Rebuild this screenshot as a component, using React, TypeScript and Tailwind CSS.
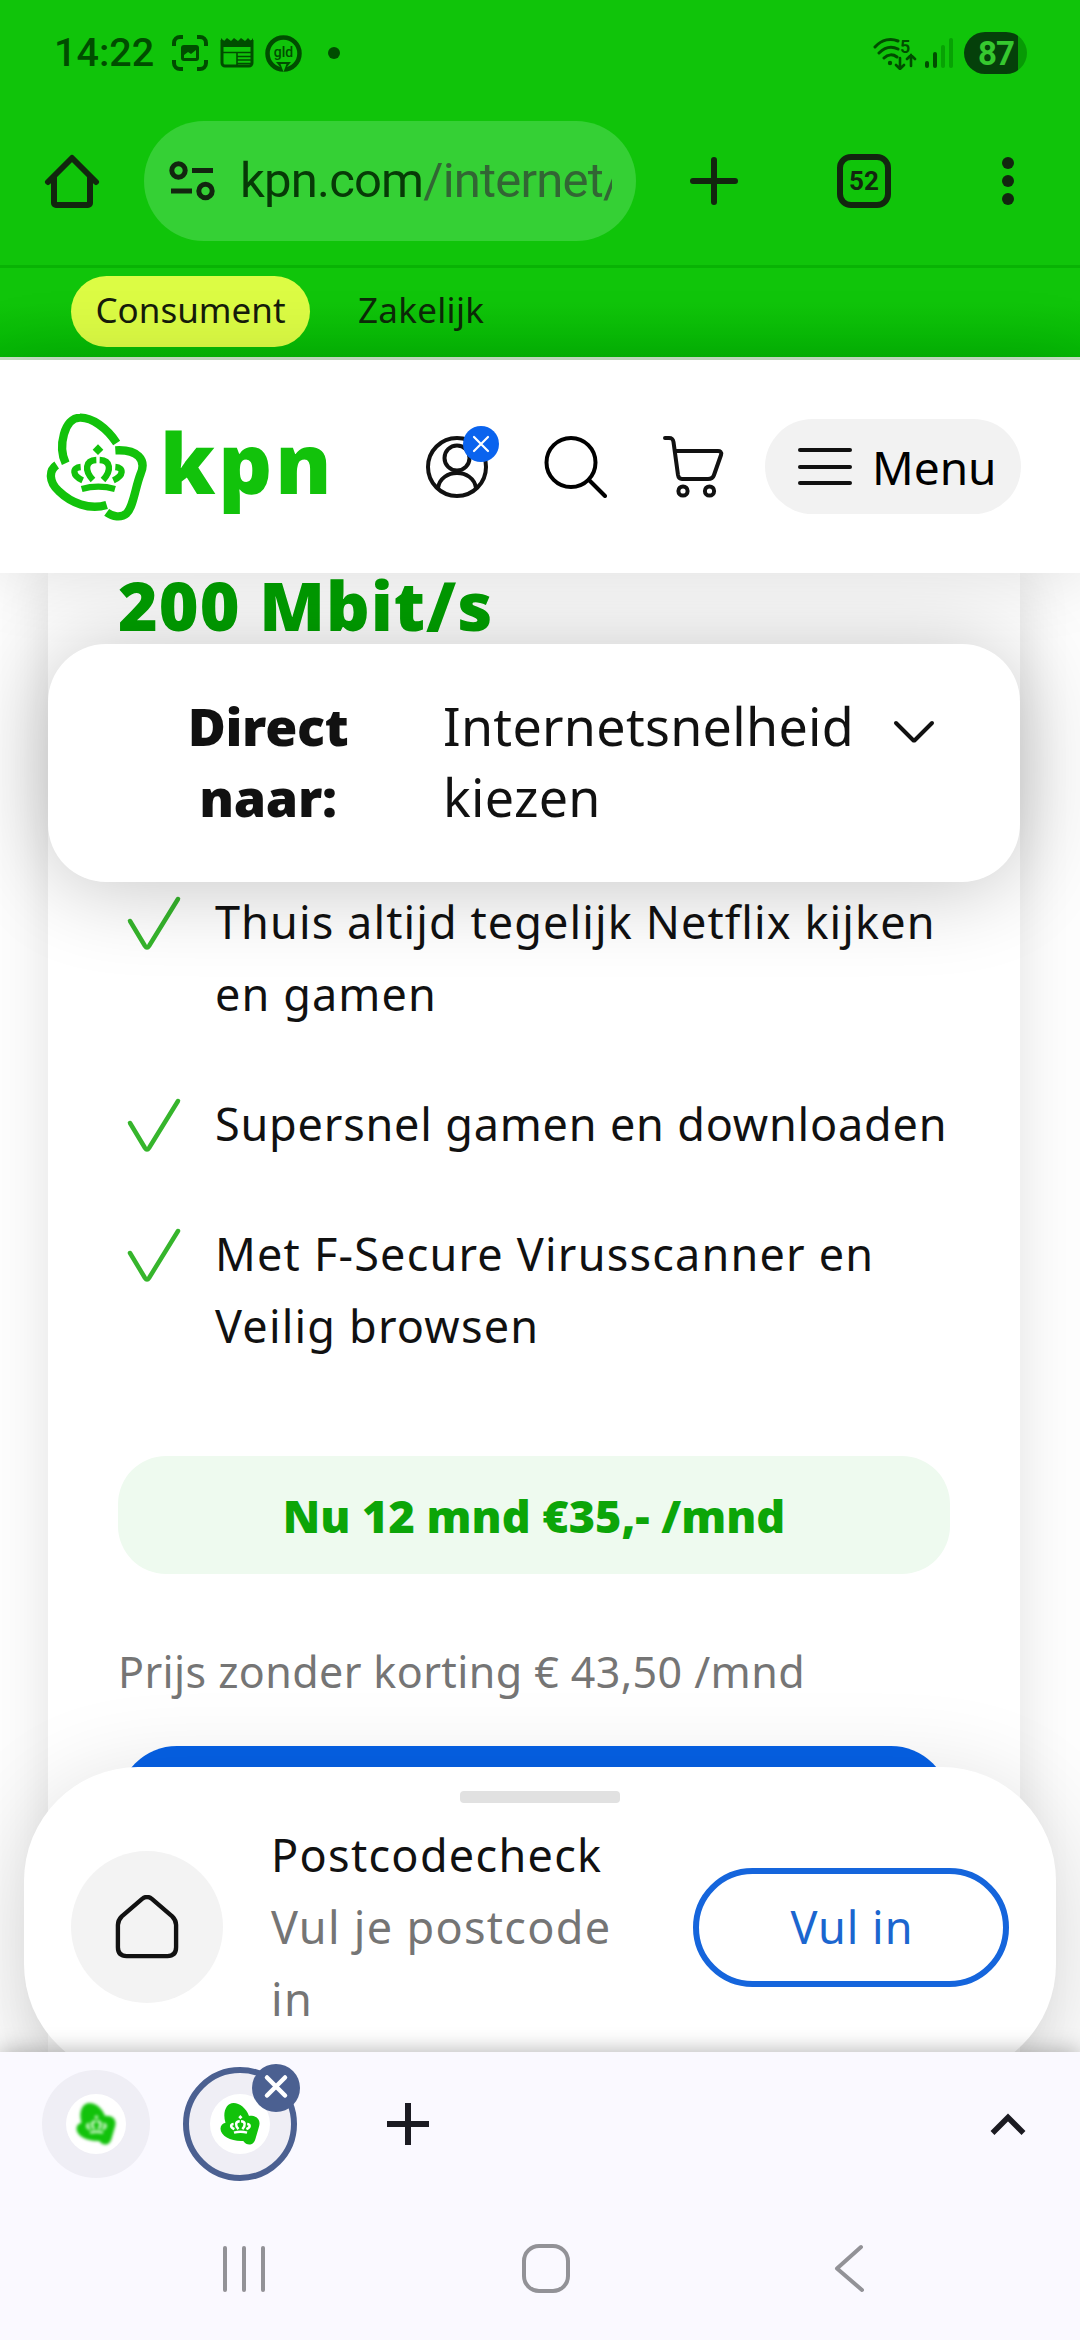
import type { ReactNode } from "react";

const GREEN = "#12c20b";

const usps = [
    { lines: ["Thuis altijd tegelijk Netflix kijken", "en gamen"], tracking: "tracking-[1.1px]" },
    { lines: ["Supersnel gamen en downloaden"], tracking: "tracking-[0.8px]" },
    { lines: ["Met F-Secure Virusscanner en", "Veilig browsen"], tracking: "tracking-[1.2px]" },
];

function Crown() {
    return (
        <g fill="none" stroke="currentColor">
            <path d="M206 162l16 16-16 16-16-16z" fill="currentColor" stroke="none" />
            <path d="M157 296Q207 282 257 296" strokeWidth="19" />
            <path d="M191 269C164 240 168 210 201 209" strokeWidth="19" />
            <path d="M221 269C248 240 244 210 211 209" strokeWidth="19" />
            <path d="M160 270C128 256 128 232 154 230" strokeWidth="19" />
            <path d="M252 270C284 256 284 232 258 230" strokeWidth="19" />
        </g>
    );
}

function KpnMark() {
    return (
        <svg className="h-[110px] w-[102px]" viewBox="50 65 306 330" fill="none" stroke={GREEN} strokeWidth="25">
            <path d="M109 219C85 168 105 82 152 82C188 81 232 112 262 158" />
            <path d="M82 224C58 240 58 275 88 302C125 338 180 360 232 344" />
            <path d="M258 180C325 176 352 208 334 250C318 290 312 350 292 369C275 384 250 379 232 366" />
            <g color={GREEN}><Crown /></g>
        </svg>
    );
}

function Favicon({ soft }: { soft?: boolean }) {
    return (
        <div className="flex size-[60px] items-center justify-center rounded-full bg-white">
            <svg className={soft ? "h-11 w-10 blur-[1.5px]" : "h-11 w-10"} viewBox="50 65 306 330">
                <path fill={GREEN} d="M92 220C66 140 100 68 155 70C200 70 250 110 272 168C340 164 366 205 346 258L322 340C308 398 256 400 228 360C140 366 52 322 54 265C54 242 70 226 92 220z" />
                <g color={soft ? "#d0f5cc" : "#fff"}><Crown /></g>
            </svg>
        </div>
    );
}

function StatusBar() {
    return (
        <div className="flex h-[106px] items-center pl-[54px] pr-[53px] font-['Roboto'] text-[#004d00]">
            <span className="w-[118px] text-[39.5px] font-medium leading-none">14:22</span>

            <svg className="size-9" viewBox="0 0 36 36" fill="none" stroke="currentColor" strokeWidth="4">
                <path d="M2 11V8a6 6 0 0 1 6-6h3M25 2h3a6 6 0 0 1 6 6v3M34 25v3a6 6 0 0 1-6 6h-3M11 34H8a6 6 0 0 1-6-6v-3" />
                <rect x="9" y="10" width="18" height="16" rx="3" fill="currentColor" stroke="none" />
                <path d="M12 23v-3l4-3 3 2 5-4v8z" fill={GREEN} stroke="none" />
            </svg>
            <svg className="ml-3 h-[30px] w-[34px]" viewBox="0 0 34 30" fill="none" stroke="currentColor">
                <path d="M2 2v23a3 3 0 0 0 3 3h24a3 3 0 0 0 3-3V2" strokeWidth="3" />
                <path d="M1 0l3 3 3-3 4 3 3-3 4 3 3-3 4 3 3-3 3 3 2-3v9H1z" fill="currentColor" stroke="none" />
                <path d="M2 14.500h30M17 14v14M17 18.500h15M17 22h15M17 25.500h15" strokeWidth="1.600" />
            </svg>
            <svg className="ml-[11px] size-[37px]" viewBox="0 0 37 37">
                <circle cx="18.500" cy="18.500" r="16" fill="none" stroke="currentColor" strokeWidth="4.500" />
                <path d="M18.500 36L11 27h15z" fill="currentColor" />
                <path d="M18.500 37l-3-8h6z" fill={GREEN} />
                <text x="18.500" y="22" fontSize="14" fontWeight="500" textAnchor="middle" fill="currentColor">gld</text>
            </svg>
            <span className="ml-[26px] size-3 rounded-full bg-current" />

            <svg className="ml-auto h-[34px] w-[44px]" viewBox="0 0 44 34" fill="none" stroke="currentColor" strokeWidth="3" strokeLinecap="round">
                <path d="M2 11C9 3 18 2 25 5M6 17c6-6 13-7 19-4M11 22c4-4 9-4 13-1" />
                <circle cx="17" cy="27" r="2.200" fill="currentColor" stroke="none" />
                <path d="M27 22v10M23 29l4 4 4-4M38 30V19M34 23l4-4 4 4" strokeWidth="2.600" />
                <text x="27" y="17" fontSize="18" fontWeight="600" fill="currentColor" stroke="none">5</text>
            </svg>
            <div className="ml-2 mr-[11px] flex h-[30px] items-end gap-1">
                <span className="h-[7px] w-1 rounded-full bg-current" />
                <span className="h-4 w-1 rounded-full bg-current" />
                <span className="h-[23px] w-1 rounded-full bg-[#07a204]" />
                <span className="h-[30px] w-1 rounded-full bg-[#07a204]" />
            </div>
            <div className="flex h-[42px] w-[63px] items-center overflow-hidden rounded-full bg-[linear-gradient(90deg,#05400a_54px,#079a05_54px)] pl-[14px] text-[33px] font-bold leading-none text-[#36c92f]">
                <span className="tracking-[-1px]">87</span>
            </div>
        </div>
    );
}

function BrowserBar() {
    return (
        <div className="flex h-[159px] items-center pb-[9px] text-[#12260f]">
            <svg className="ml-11 size-14" viewBox="0 0 56 56" fill="none" stroke="currentColor" strokeWidth="6" strokeLinecap="round" strokeLinejoin="round">
                <path d="M4 29L28 5l24 24" />
                <path d="M10 25v25a2 2 0 0 0 2 2h32a2 2 0 0 0 2-2V25" />
            </svg>

            <div className="ml-11 flex h-[120px] w-[492px] items-center rounded-full bg-[#35d035] pl-[25px]">
                <svg className="h-[40px] w-[46px]" viewBox="0 0 46 40" fill="none" stroke="currentColor" strokeWidth="5">
                    <circle cx="9.500" cy="9.500" r="6.700" />
                    <path d="M23 9.500h21M2 30h21" />
                    <circle cx="36.500" cy="30" r="6.700" />
                </svg>
                <div className="ml-[25px] w-[372px] overflow-hidden whitespace-nowrap font-['Roboto'] text-[49px] leading-[70px] tracking-[-0.8px] text-[#073a07]">
                    kpn.com<span className="text-[#326634]">/internet/</span>
                </div>
            </div>

            <svg className="ml-[53px] size-[50px]" viewBox="0 0 50 50" stroke="currentColor" strokeWidth="6" strokeLinecap="round">
                <path d="M25 4v42M4 25h42" />
            </svg>
            <div className="ml-[98px] flex size-[54px] items-center justify-center rounded-[14px] border-[6px] border-current font-['Roboto'] text-[26px] font-bold leading-none">
                52
            </div>
            <div className="ml-[111px] flex flex-col gap-1.5">
                <span className="size-3 rounded-full bg-current" />
                <span className="size-3 rounded-full bg-current" />
                <span className="size-3 rounded-full bg-current" />
            </div>
        </div>
    );
}

function SegmentBar() {
    return (
        <div className="flex h-[95px] items-start border-b-[3px] border-t-[3px] border-b-[#cbe4c8] border-t-[#08b304] bg-gradient-to-b from-[#10c50a] from-40% to-[#04b804] pl-[71px] pt-2 text-[35px] leading-[67px] text-[#0c2a08]">
            <span className="h-[71px] w-[239px] rounded-full bg-[#dcfc44] text-center text-[#161c0b]">Consument</span>
            <span className="ml-[48px] tracking-[0.3px]">Zakelijk</span>
        </div>
    );
}

function SiteHeader() {
    return (
        <header className="relative z-20 flex h-[213px] items-center bg-white pl-[46px] pr-[59px] shadow-[0_0_70px_rgba(0,0,0,0.14)]">
            <KpnMark />
            <span className="-mt-[10px] ml-[12px] w-[180px] text-[84px] font-black leading-[100px] tracking-[3px] text-[#12c20b]">kpn</span>

            <div className="relative ml-[86px]">
                <svg className="size-[62px]" viewBox="0 0 62 62" fill="none" stroke="#111" strokeWidth="4">
                    <circle cx="31" cy="31" r="29" />
                    <circle cx="31" cy="22" r="12.500" />
                    <path d="M12 52C15 32 47 32 50 52" />
                </svg>
                <svg className="absolute -top-[10px] left-[37px] size-9" viewBox="0 0 36 36">
                    <circle cx="18" cy="18" r="18" fill="#0a63ee" />
                    <path d="M11 11l14 14M25 11L11 25" stroke="#fff" strokeWidth="2.200" strokeLinecap="round" />
                </svg>
            </div>
            <svg className="ml-[56px] h-[62px] w-[63px]" viewBox="0 0 63 62" fill="none" stroke="#000" strokeWidth="4" strokeLinecap="round">
                <circle cx="27" cy="26.500" r="24.500" />
                <path d="M45 44l16 16" />
            </svg>
            <svg className="ml-[56px] h-[62px] w-[61px]" viewBox="0 0 61 62" fill="none" stroke="#111" strokeWidth="4" strokeLinecap="round" strokeLinejoin="round">
                <path d="M2 2h4c3 0 4 1 4.500 4L15 39c.5 3 2 4 4 4h26c3 0 5-1 6-4l7-20c1-3-1-4-3-4H13" />
                <circle cx="20" cy="55" r="4.600" />
                <circle cx="46.500" cy="55" r="4.600" />
            </svg>

            <div className="ml-auto flex h-[95px] w-[256px] items-center rounded-full bg-[#f2f2f2] pl-[33px]">
                <div className="flex w-[54px] flex-col gap-[12.5px]">
                    <span className="h-1 rounded-full bg-[#111]" />
                    <span className="h-1 rounded-full bg-[#111]" />
                    <span className="h-1 rounded-full bg-[#111]" />
                </div>
                <span className="ml-5 text-[46px] leading-[60px] text-black">Menu</span>
            </div>
        </header>
    );
}

function QuickNav() {
    return (
        <div className="absolute left-12 right-[60px] top-[71px] z-10 flex h-[238px] rounded-[58px] bg-white pt-[46px] text-[52px] leading-[71px] text-[#111] shadow-[0_4px_90px_rgba(0,0,0,0.24)]">
            <div className="ml-[115px] w-[210px] text-center font-black tracking-[-0.3px]">Direct<br />naar:</div>
            <div className="ml-[70px] tracking-[0.3px]">Internetsnelheid<br />kiezen</div>
            <svg className="absolute right-[85px] top-[76px] h-[24px] w-[42px]" viewBox="0 0 42 24" fill="none" stroke="#111" strokeWidth="4" strokeLinecap="round" strokeLinejoin="round">
                <path d="M3 3l17 17q1 1 2 0L39 3" />
            </svg>
        </div>
    );
}

function Usp({ children }: { children: ReactNode }) {
    return (
        <li className="flex items-start">
            <svg className="mt-[8px] ml-2 mr-[33px] h-[57px] w-[56px] shrink-0" viewBox="0 0 56 57" fill="none" stroke="#36b52c" strokeWidth="4.500" strokeLinecap="round" strokeLinejoin="round">
                <path d="M4 27l15 25q2 3 4 0L52 5" />
            </svg>
            <div>{children}</div>
        </li>
    );
}

function OfferCard() {
    return (
        <section className="ml-12 h-[1479px] w-[972px] bg-white px-[70px] shadow-[0_0_50px_rgba(0,0,0,0.11)]">
            <h2 className="pt-0.5 text-[68px] font-black leading-[60px] tracking-[1px] text-[#00a100]">200 Mbit/s</h2>

            <ul className="mt-[251px] flex flex-col gap-[58px] text-[45px] leading-[72px] text-[#111]">
                {usps.map(({ lines, tracking }) => (
                    <Usp key={lines[0]}>
                        {lines.map((line) => (
                            <p key={line} className={`whitespace-nowrap ${tracking}`}>{line}</p>
                        ))}
                    </Usp>
                ))}
            </ul>

            <div className="mt-[94px] h-[118px] rounded-[48px] bg-[#eefaef] text-center text-[45px] font-black leading-[119px] tracking-[0px] text-[#0ca508]">
                Nu 12 mnd €35,- /mnd
            </div>
            <p className="mt-[62px] whitespace-nowrap text-[43px] leading-[72px] tracking-[0.4px] text-[#757575]">Prijs zonder korting € 43,50 /mnd</p>
            <div className="mt-[38px] h-[118px] rounded-full bg-[#0661e6]" />
        </section>
    );
}

function PostcodeSheet() {
    return (
        <div className="absolute left-6 right-6 top-[1194px] z-10 h-[311px] rounded-[114px] bg-white pt-6 shadow-[0_20px_100px_rgba(0,0,0,0.16)]">
            <div className="mx-auto h-3 w-40 rounded-[4px] bg-[#e1e1e1]" />
            <div className="mt-4 flex h-[216px] items-center pl-[47px] pr-[47px]">
                <div className="flex size-[152px] items-center justify-center rounded-full bg-[#f3f3f3]">
                    <svg className="size-[64px]" viewBox="0 0 66 66" fill="none" stroke="#111" strokeWidth="4.500" strokeLinejoin="round">
                        <path d="M3 31q0-5 4-9L28 4q5-4 10 0l21 18q4 4 4 9v23q0 9-9 9H12q-9 0-9-9z" />
                    </svg>
                </div>
                <div className="ml-12 text-[45px] leading-[72px] tracking-[1.3px] text-[#757575]">
                    <p className="text-[#111]">Postcodecheck</p>
                    <p>Vul je postcode</p>
                    <p>in</p>
                </div>
                <button className="ml-auto h-[119px] w-[316px] rounded-full border-[6px] border-[#1565dc] pb-0.5 pl-0.5 text-[45px] leading-none tracking-[1px] text-[#1b66cf]">
                    Vul in
                </button>
            </div>
        </div>
    );
}

function TabStrip() {
    return (
        <div className="flex h-[144px] items-center pl-[42px] pr-[54px] text-[#1b1b22]">
            <div className="flex size-[108px] items-center justify-center rounded-full bg-[#efeef5]">
                <Favicon soft />
            </div>
            <div className="relative ml-[33px] flex size-[114px] items-center justify-center rounded-full border-[6px] border-[#4b6091] bg-[#efeef5]">
                <Favicon />
                <svg className="absolute -top-[9px] left-[63px] size-12" viewBox="0 0 48 48">
                    <circle cx="24" cy="24" r="24" fill="#4b6091" />
                    <path d="M15 13.500l18 18M33 13.500l-18 18" stroke="#fff" strokeWidth="4.500" strokeLinecap="round" />
                </svg>
            </div>
            <svg className="ml-[90px] size-[42px]" viewBox="0 0 42 42" stroke="currentColor" strokeWidth="6">
                <path d="M21 0v42M0 21h42" />
            </svg>
            <svg className="ml-auto h-[24px] w-9" viewBox="0 0 36 24" fill="none" stroke="currentColor" strokeWidth="5.500">
                <path d="M2.500 21L18 5.500 33.500 21" />
            </svg>
        </div>
    );
}

function AndroidNav() {
    return (
        <div className="flex h-[144px] items-start pl-[223px] pt-[48px]">
            <div className="flex gap-[15px] pt-0.5">
                <span className="h-[46px] w-1 rounded-full bg-[#929297]" />
                <span className="h-[46px] w-1 rounded-full bg-[#929297]" />
                <span className="h-[46px] w-1 rounded-full bg-[#929297]" />
            </div>
            <span className="ml-[257px] h-[49px] w-12 rounded-[17px] border-4 border-[#929297]" />
            <svg className="ml-[263px] h-[49px] w-8" viewBox="0 0 32 49" fill="none" stroke="#929297" strokeWidth="4" strokeLinecap="round" strokeLinejoin="round">
                <path d="M28 3L4 24.500 29 46" />
            </svg>
        </div>
    );
}

export default function App() {
    return (
        <div className="h-[2340px] w-[1080px] overflow-hidden bg-[#fdfdfd] font-['Noto_Sans','Open_Sans',sans-serif]">
            <div className="bg-[#10c40a]">
                <StatusBar />
                <BrowserBar />
                <SegmentBar />
            </div>
            <SiteHeader />
            <main className="relative h-[1479px] overflow-hidden">
                <OfferCard />
                <QuickNav />
                <PostcodeSheet />
            </main>
            <footer className="relative z-20 h-72 bg-[#faf9ff] shadow-[0_-2px_20px_rgba(0,0,0,0.28)]">
                <TabStrip />
                <AndroidNav />
            </footer>
        </div>
    );
}
